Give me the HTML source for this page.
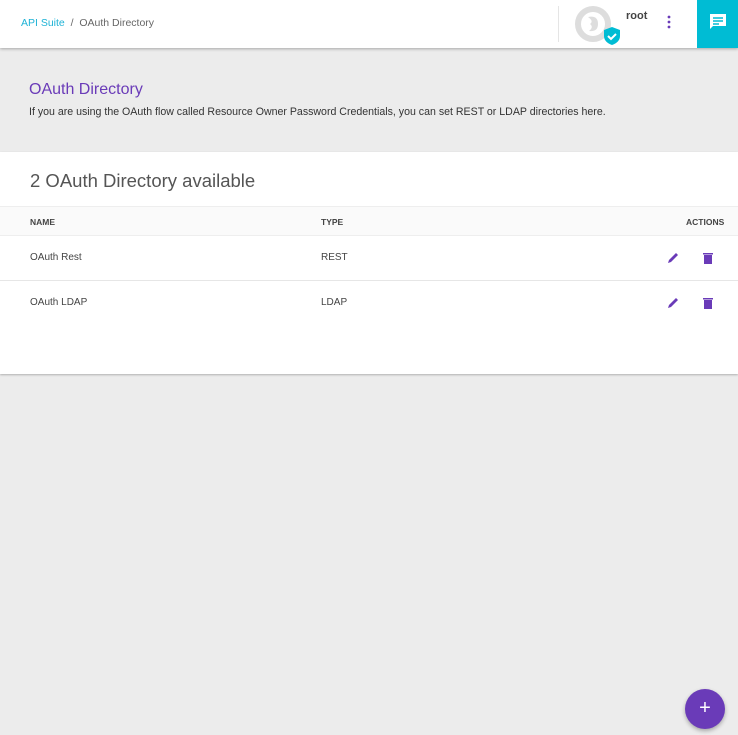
<!DOCTYPE html>
<html><head><style>
*{box-sizing:border-box;margin:0;padding:0}
body{width:738px;height:735px;background:#ececec;font-family:"Liberation Sans",sans-serif;position:relative;overflow:hidden}
.top{position:absolute;left:0;top:0;width:738px;height:48px;background:#fff;box-shadow:0 1px 3px rgba(0,0,0,.3)}
.bc{position:absolute;left:21px;top:17px;font-size:10.5px;color:#666}
.bc a{color:#1fb3d6}
.sep{position:absolute;left:558px;top:6px;width:1px;height:36px;background:#e5e5e5}
.chat{position:absolute;left:697px;top:0;width:41px;height:48px;background:#00bcd4}
.t1{position:absolute;left:29px;top:81px;font-size:16px;color:#6a3bb8}
.t2{position:absolute;left:29px;top:106px;font-size:10.6px;color:#333}
.card{position:absolute;left:0;top:152px;width:738px;height:222px;background:#fff;box-shadow:0 1px 2px rgba(0,0,0,.25)}
.h{position:absolute;left:30px;top:18px;font-size:18.5px;color:#555}
.thead{position:absolute;left:0;top:54px;width:738px;height:30px;background:#fafafa;border-top:1px solid #eee;border-bottom:1px solid #eee;font-size:8.5px;font-weight:bold;color:#444}
.thead span,.row span{position:absolute;top:10px}
.row{position:absolute;left:0;width:738px;height:45px;font-size:10px;color:#444}
.row span{top:16px}
.ic{position:absolute}
.fab{position:absolute;left:685px;top:689px;width:40px;height:40px;border-radius:50%;background:#6a3bb8;color:#fff;font-size:20px;text-align:center;line-height:38px;box-shadow:0 2px 4px rgba(0,0,0,.3)}
</style></head><body>
<div class="top">
<div class="bc"><a>API Suite</a> &nbsp;/&nbsp; OAuth Directory</div>
<div class="sep"></div>
<svg style="position:absolute;left:574px;top:5px" width="48" height="40"><circle cx="19" cy="19" r="15" fill="none" stroke="#ddd" stroke-width="6"/><path d="M14 12 Q24 10 24 19 Q24 27 15 26 Q20 22 16 19 Q20 16 14 12Z" fill="#ddd"/><path d="M38 22 l8 3 v6 q0 6-8 9 q-8-3-8-9 v-6z" fill="#00bcd4"/><path d="M34 31 l3 3 5-5" stroke="#fff" stroke-width="2" fill="none"/></svg>
<div style="position:absolute;left:626px;top:10px;font-size:11px;font-weight:bold;color:#444">root</div>
<svg style="position:absolute;left:667px;top:15px" width="4" height="14"><circle cx="2" cy="2" r="1.4" fill="#6a3bb8"/><circle cx="2" cy="7" r="1.4" fill="#6a3bb8"/><circle cx="2" cy="12" r="1.4" fill="#6a3bb8"/></svg>
</div>
<div class="chat"><svg style="position:absolute;left:12px;top:13px" width="18" height="18"><path d="M1 1h16v12H4l-3 3z" fill="#fff"/><path d="M4 5h10M4 8h10M4 11h6" stroke="#00bcd4" stroke-width="1.4"/></svg></div>
<div class="t1">OAuth Directory</div>
<div class="t2">If you are using the OAuth flow called Resource Owner Password Credentials, you can set REST or LDAP directories here.</div>
<div class="card">
<div class="h">2 OAuth Directory available</div>
<div class="thead"><span style="left:30px">NAME</span><span style="left:321px">TYPE</span><span style="left:686px">ACTIONS</span></div>
<div class="row" style="top:84px;border-bottom:1px solid #e6e6e6"><span style="left:30px">OAuth Rest</span><span style="left:321px">REST</span>
<svg class="ic" style="left:667px;top:16px" width="12" height="12"><path d="M1 11 l1-3 7-7 2 2-7 7z" fill="#6a3bb8"/></svg>
<svg class="ic" style="left:703px;top:16px" width="10" height="12"><rect x="0" y="1" width="10" height="1.5" fill="#6a3bb8"/><rect x="1" y="3" width="8" height="9" fill="#6a3bb8"/></svg></div>
<div class="row" style="top:129px"><span style="left:30px">OAuth LDAP</span><span style="left:321px">LDAP</span>
<svg class="ic" style="left:667px;top:16px" width="12" height="12"><path d="M1 11 l1-3 7-7 2 2-7 7z" fill="#6a3bb8"/></svg>
<svg class="ic" style="left:703px;top:16px" width="10" height="12"><rect x="0" y="1" width="10" height="1.5" fill="#6a3bb8"/><rect x="1" y="3" width="8" height="9" fill="#6a3bb8"/></svg></div>
</div>
<div class="fab">+</div>
</body></html>
